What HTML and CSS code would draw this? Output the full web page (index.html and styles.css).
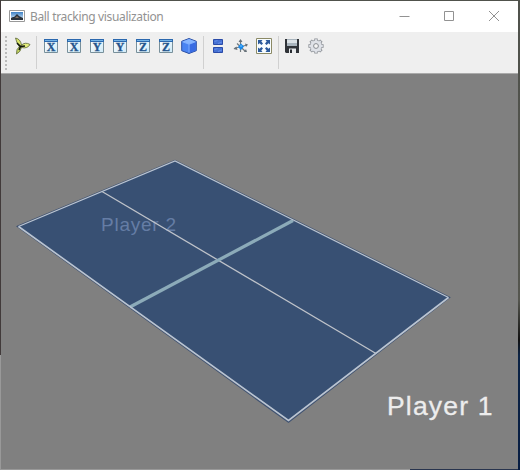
FILE: index.html
```html
<!DOCTYPE html>
<html lang="en">
<head>
<meta charset="utf-8">
<title>Ball tracking visualization</title>
<link rel="stylesheet" href="styles.css">
</head>
<body>
<svg class="defs" aria-hidden="true">
  <defs>
    <linearGradient id="sky" x2="0" y2="1"><stop offset="0" stop-color="#3b7fc4"/><stop offset="1" stop-color="#e6f5ff"/></linearGradient>
    <linearGradient id="pane" x2="1" y2="1"><stop offset="0" stop-color="#fff"/><stop offset="1" stop-color="#cfeaf8"/></linearGradient>
    <symbol id="frame" viewBox="0 0 16 16">
      <path fill="url(#pane)" d="M1.500 1.500h13v13h-13z"/>
      <path fill="none" stroke="#78909b" d="M1.500 3v11.500h13V3"/>
      <path fill="#2b68ae" d="M1 1h14v3H1z"/><path fill="#74b4e6" d="M2 2h12v1H2z"/>
    </symbol>
  </defs>
</svg>
<main class="window">
  <header class="titlebar">
    <svg class="app-icon" viewBox="0 0 16 12"><path fill="#fff" stroke="#999" d="M.5.5h15v11H.5z"/><path fill="url(#sky)" d="M2 2h12v8H2z"/><path fill="#29323c" d="M2 8l2-1 1 0 3-3 2 2 2 1 2 1v2H2z"/><path fill="#806e60" d="M6 8l2-2 1 1 1 1z"/></svg>
    <h1 class="title">Ball tracking visualization</h1>
    <div class="controls">
      <svg viewBox="0 0 11 10"><path d="M.5 5.500h10"/></svg>
      <svg viewBox="0 0 11 10"><path d="M.5 .5h9v9h-9z"/></svg>
      <svg viewBox="0 0 11 10"><path d="M0 0l10 10M10 0L0 10"/></svg>
    </div>
  </header>
  <nav class="toolbar">
    <span class="grip"></span>
    <span class="tool first"><svg viewBox="0 0 18 18"><g stroke="#59653a" stroke-width=".8"><path fill="#d8e46c" d="M2.500 1Q7.500 2 8.500 8L6.500 10Q3.500 6 2.500 1z"/><path fill="#e3ed7a" d="M8 8.500Q12 4.500 17 7.500 14.500 12 8.500 10.500z"/><path fill="#c5d660" d="M6.500 9.500L8.500 10.500Q7.500 15 3.500 17 3 12 6.500 9.500z"/></g><path fill="none" stroke="#10150e" stroke-width="1.500" d="M4 6l3.500 3.500L12 9M7.500 9.500L6 13"/></svg></span>
    <span class="separator"></span>
    <span class="tool"><svg viewBox="0 0 16 16"><use href="#frame"/><text class="axis" x="8" y="13">X</text></svg></span>
    <span class="tool"><svg viewBox="0 0 16 16"><use href="#frame"/><text class="axis" x="8" y="13">X</text></svg></span>
    <span class="tool"><svg viewBox="0 0 16 16"><use href="#frame"/><text class="axis" x="8" y="13">Y</text></svg></span>
    <span class="tool"><svg viewBox="0 0 16 16"><use href="#frame"/><text class="axis" x="8" y="13">Y</text></svg></span>
    <span class="tool"><svg viewBox="0 0 16 16"><use href="#frame"/><text class="axis" x="8" y="13">Z</text></svg></span>
    <span class="tool"><svg viewBox="0 0 16 16"><use href="#frame"/><text class="axis" x="8" y="13">Z</text></svg></span>
    <span class="tool"><svg viewBox="0 0 16 16"><path fill="#4a84f2" stroke="#2b4fa4" d="M8 .5l7.300 2.800v9.400L8 15.500.7 12.700V3.300z"/><path fill="#86b5ff" d="M8 1l6.500 2.500L8 6 1.500 3.500z"/><path fill="#386be2" d="M8.500 6.500l6.300-2.500v8.400L8.500 15z"/><path fill="none" stroke="#8db9ff" stroke-width=".8" d="M1.500 3.800L8 6.200l6.500-2.400M8 6.200V14.500"/></svg></span>
    <span class="separator wide"></span>
    <span class="tool"><svg viewBox="0 0 16 16"><g fill="#4672d4" stroke="#2a4ba8"><path d="M3.500 1.500h9v5h-9zM3.500 9.500h9v5h-9z"/></g><path fill="none" stroke="#668eea" d="M4.500 3.500l3-1M8 5.500l4-1.500M4.500 11.500l3-1M8 13.500l4-1.500"/></svg></span>
    <span class="tool"><svg viewBox="0 0 16 16"><path fill="none" stroke="#737b80" stroke-width="1.200" d="M7.500 2v12M1 10.500L14 7M4 5.500l8.500 8"/><path fill="#68727a" d="M5.500 4l2-3 2 3zM3.500 8.500L.5 11l4 1zM12 5.500l3 1-2 2.500zM11 14l3 0-1-3z"/><path fill="#1689ed" d="M8 5.500l3 3-3 3.500-3-3z"/><path stroke="#72c5ff" d="M7 8h2"/></svg></span>
    <span class="tool"><svg viewBox="0 0 16 16"><path fill="#f8fdff" stroke="#8c8a66" d="M.5.5h15v15H.5z"/><path fill="#2c5a9c" d="M2 2h4.500L5.300 3.500 7 5.500 5.500 7 3.500 5.300 2 6.500zM14 2H9.500l1.200 1.500L9 5.500 10.500 7l2-1.700L14 6.500zM2 14h4.500l-1.200-1.500L7 10.500 5.500 9l-2 1.700L2 9.500zM14 14H9.500l1.200-1.500L9 10.500 10.500 9l2 1.700L14 9.500z"/></svg></span>
    <span class="separator wide"></span>
    <span class="tool floppy"><svg viewBox="0 0 16 16"><path fill="#303338" d="M1 1h14v14H2l-1-1z"/><path fill="#a9b4bd" d="M3 1h10v7H3z"/><path fill="#dce2e6" d="M3 2h10v3H3z"/><path fill="#e8eaec" d="M5 10.500h7V15H5z"/><path fill="#282b30" d="M6 11.500h2V15H6z"/></svg></span>
    <span class="tool"><svg viewBox="0 0 16 16"><g stroke="#8c9096" stroke-width="3.400"><path d="M8 .4v15.200M.4 8h15.200M2.600 2.600l10.800 10.800M13.400 2.600L2.600 13.400"/></g><circle cx="8" cy="8" r="6.300" fill="#9a9ea4"/><g stroke="#dfe2e8" stroke-width="1.900"><path d="M8 1.200v13.600M1.200 8h13.600M3.200 3.200l9.600 9.600M12.800 3.200l-9.600 9.600"/></g><circle cx="8" cy="8" r="5.600" fill="#dfe2e8"/><circle cx="8" cy="8" r="2.400" fill="#f5f5f5" stroke="#888c92"/></svg></span>
  </nav>
  <svg class="scene" viewBox="1 74 517 395">
    <path class="edge" d="M18.500 226.500L175 161 448.500 297.500 288.500 421.500z"/>
    <path class="table" d="M18.500 226.500L175 161 448.500 297.500 288.500 420.500z"/>
    <text class="far" x="101" y="230.500" textLength="75">Player 2</text>
    <path class="center-line" d="M102 191.500L376 353.500"/>
    <path class="net" d="M130 307L293 220.500"/>
    <path class="border" d="M18.500 226.500L175 161 448.500 297.500"/>
    <path class="border near" d="M18.500 226.500L288.500 420.500 448.500 297.500"/>
    <text class="label" x="387" y="414.500" textLength="105.500">Player 1</text>
  </svg>
</main>
</body>
</html>
```
FILE: styles.css
```css
* { box-sizing: border-box; }
body {
  margin: 0;
  height: 470px;
  padding: 1px 2px 1px 1px;
  overflow: hidden;
  background:
    linear-gradient(90deg, #999 410px, #28344e 410px) 0 100% / 518px 1px no-repeat,
    linear-gradient(#413a3a 355px, #999 355px) 0 0 / 1px 100% no-repeat,
    linear-gradient(#50524c 75px, #55564f 300px, #111 340px, #0b2345 356px, #071d42 100%);
}
.defs { position: absolute; width: 0; height: 0; }
.window { display: flex; flex-direction: column; width: 517px; height: 468px; }
.titlebar { display: flex; align-items: center; height: 31px; padding-left: 8px; background: #fff; }
.app-icon { width: 16px; height: 12px; margin-top: -2px; }
.title {
  flex: 1;
  margin: -1px 0 0 5px;
  font: 400 12px "Noto Sans", "Open Sans", sans-serif;
  letter-spacing: -0.34px;
  color: #929292;
}
.controls { display: flex; gap: 34px; padding-right: 18px; margin-top: -2px; }
.controls svg { width: 11px; height: 10px; fill: none; stroke: #929292; stroke-width: 1; overflow: visible; }
.toolbar {
  display: flex;
  align-items: flex-start;
  height: 42px;
  padding: 4px 0 0 4px;
  background: #efefef;
  border-bottom: 1px solid #aaa;
}
.grip { width: 2px; height: 34px; background: repeating-linear-gradient(#bbb 0 2px, #efefef 2px 4px); }
.tool { display: flex; width: 23px; height: 22px; padding: 2px 3px 0; }
.tool svg { flex: none; width: 16px; height: 16px; }
.tool.first { width: 25px; margin-left: 3px; padding-top: 1px; }
.tool.first svg { width: 18px; height: 18px; }
.tool.floppy { width: 24px; }
.separator { width: 4px; height: 33px; margin-left: 1px; border-left: 1px solid #d0d0d0; }
.separator.wide { margin-left: 2px; }
.separator.wide + .floppy { margin-left: -1px; }
.axis { font: 700 12px "Liberation Serif", serif; fill: #24558c; stroke: #24558c; stroke-width: .3; text-anchor: middle; }
.scene { display: block; width: 517px; height: 395px; background: #808080; }
.scene text { font-family: "Liberation Sans", sans-serif; }
.table { fill: #385073; }
.edge { fill: none; stroke: #415371; stroke-width: 2.5; }
.border { fill: none; stroke: #bbc5d2; stroke-width: 1.2; }
.near { stroke-width: 1.6; }
.center-line { stroke: #bfc3ca; stroke-width: 1.3; }
.net { stroke: #8cabb9; stroke-width: 3.2; }
.far { font-size: 19px; fill: #657da5; }
.label { font-size: 26.5px; fill: #ededed; stroke: #ededed; stroke-width: .3; }
```
